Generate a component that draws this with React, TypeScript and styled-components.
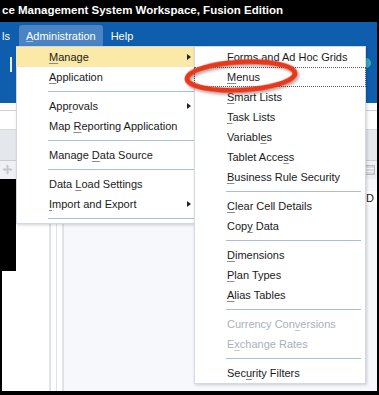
import styled, { createGlobalStyle } from "styled-components";

const GlobalStyle = createGlobalStyle`
  html, body {
    margin: 0;
    padding: 0;
    background: #000;
  }
  body {
    font-family: "Liberation Sans", Arial, sans-serif;
  }
`;

const Frame = styled.div`
  position: relative;
  width: 377px;
  height: 391px;
  border-right: 2px solid #000;
  border-bottom: 4px solid #000;
  background: #fff;
  overflow: hidden;
  display: flex;
  flex-direction: column;
`;

const TitleBar = styled.div`
  height: 22px;
  flex: none;
  background: #000;
  color: #fff;
  font-weight: 700;
  font-size: 11.5px;
  line-height: 21px;
  padding-left: 2px;
  white-space: nowrap;
`;

const BlueBand = styled.div`
  height: 81px;
  flex: none;
  background: #0f5eae;
  display: flex;
  flex-direction: column;
`;

const MenuBar = styled.div`
  height: 25px;
  display: flex;
  align-items: center;
  gap: 1px;
  padding-left: 2px;
`;

const BarItem = styled.div<{ $open?: boolean }>`
  height: 21px;
  margin-top: 2px;
  padding: 0 7px;
  display: flex;
  align-items: center;
  color: #fff;
  font-size: 11px;
  border-radius: 3px 3px 0 0;
  background: ${(p) => (p.$open ? "#4a84c2" : "transparent")};
  &:first-child {
    padding-left: 0;
    padding-right: 8px;
  }
`;

const ToolBar = styled.div`
  flex: 1;
  display: flex;
  align-items: flex-start;
  justify-content: space-between;
  padding: 10px 6px 0 10px;
`;

const ToolSep = styled.div`
  width: 2px;
  height: 15px;
  background: #e8eef6;
`;

const ToolKnob = styled.div`
  width: 10px;
  height: 10px;
  margin-top: 1px;
  border-radius: 50%;
  background: #3aa6b9;
`;

const Band = styled.div<{ $h: number; $bg: string; $line?: string }>`
  height: ${(p) => p.$h}px;
  flex: none;
  background: ${(p) => p.$bg};
  border-bottom: 1px solid ${(p) => p.$line || "transparent"};
  display: flex;
  align-items: center;
  justify-content: space-between;
  padding: 0 2px 0 2px;
`;

const MoveIcon = styled.svg`
  width: 11px;
  height: 11px;
`;

const Workspace = styled.div`
  flex: 1;
  display: flex;
`;

const SidePanel = styled.div`
  width: 47px;
  border-left: 2px solid #000;
  background: #fff;
  display: flex;
  align-items: flex-start;
`;

const BlackGutter = styled.div`
  width: 14px;
  height: 92px;
  background: #000;
`;

const Splitter = styled.div`
  width: 15px;
  display: flex;
  gap: 5px;
  background: #fff;
`;

const SplitLine = styled.div`
  width: 2px;
  background: #dfe4ec;
`;

const Canvas = styled.div`
  flex: 1;
  background: #f6f8fb;
  display: flex;
  justify-content: flex-end;
`;

const ColHead = styled.div`
  width: 11px;
  height: 14px;
  margin-top: 12px;
  background: #fff;
  font-size: 11px;
  color: #222;
  line-height: 14px;
  overflow: hidden;
`;

const Menu = styled.div<{ $left: number; $width: number }>`
  position: absolute;
  top: 46px;
  left: ${(p) => p.$left}px;
  width: ${(p) => p.$width}px;
  background: #fff;
  border: 1px solid #d3d9e2;
  box-shadow: 1px 1px 3px rgba(0, 0, 0, 0.18);
  display: flex;
  flex-direction: column;
`;

const Item = styled.div<{ $hot?: boolean; $focus?: boolean; $off?: boolean }>`
  position: relative;
  height: 20px;
  box-sizing: border-box;
  display: flex;
  align-items: center;
  font-size: 11px;
  white-space: pre;
  color: ${(p) => (p.$off ? "#a9b0ba" : "#1a1a1a")};
  background: ${(p) => (p.$hot ? "#fbe9a7" : "transparent")};
  border: 1px dotted ${(p) => (p.$focus ? "#5a5a5a" : "transparent")};
  margin: 0 -1px;
  padding-left: 32px;
  u {
    text-decoration-thickness: 1px;
    text-underline-offset: 2px;
    text-decoration-color: ${(p) => (p.$off ? "#c4c9d0" : "#8a8a8a")};
  }
`;

const Arrow = styled.span`
  position: absolute;
  right: 7px;
  top: 6px;
  width: 0;
  height: 0;
  border-top: 3.5px solid transparent;
  border-bottom: 3.5px solid transparent;
  border-left: 4px solid #222;
`;

const Sep = styled.div<{ $right: number }>`
  height: 9px;
  display: flex;
  align-items: center;
  padding: 0 ${(p) => p.$right}px 0 31px;
  &::after {
    content: "";
    flex: 1;
    height: 1px;
    background: #a9bfd8;
  }
`;

const Callout = styled.svg`
  position: absolute;
  left: 180px;
  top: 54px;
  width: 124px;
  height: 46px;
  overflow: visible;
`;

type Entry =
  | { label: string; u?: number; arrow?: boolean; hot?: boolean; focus?: boolean; off?: boolean }
  | "sep";

const mainItems: Entry[] = [
  { label: "Manage", u: 0, arrow: true, hot: true },
  { label: "Application", u: 0 },
  "sep",
  { label: "Approvals", u: 3, arrow: true },
  { label: "Map Reporting Application", u: 4 },
  "sep",
  { label: "Manage Data Source", u: 7 },
  "sep",
  { label: "Data Load Settings", u: 5 },
  { label: "Import and Export", u: 0, arrow: true },
  "sep",
];

const subItems: Entry[] = [
  { label: "Forms and Ad Hoc Grids", u: 0 },
  { label: "Menus", u: 0, focus: true },
  { label: "Smart Lists", u: 0 },
  { label: "Task Lists", u: 0 },
  { label: "Variables", u: 7 },
  { label: "Tablet Access", u: 11 },
  { label: "Business Rule Security", u: 0 },
  "sep",
  { label: "Clear Cell Details", u: 0 },
  { label: "Copy Data", u: 3 },
  "sep",
  { label: "Dimensions", u: 0 },
  { label: "Plan Types", u: 0 },
  { label: "Alias Tables", u: 0 },
  "sep",
  { label: "Currency Conversions", u: 12, off: true },
  { label: "Exchange Rates", u: 1, off: true },
  "sep",
  { label: "Security Filters", u: 3 },
];

const Label = ({ text, u }: { text: string; u?: number }) =>
  u === undefined ? (
    <span>{text}</span>
  ) : (
    <span>
      {text.slice(0, u)}
      <u>{text[u]}</u>
      {text.slice(u + 1)}
    </span>
  );

const MenuList = ({ items, sepRight }: { items: Entry[]; sepRight: number }) => (
  <>
    {items.map((it, i) =>
      it === "sep" ? (
        <Sep key={i} $right={sepRight} />
      ) : (
        <Item key={i} $hot={it.hot} $focus={it.focus} $off={it.off}>
          <Label text={it.label} u={it.u} />
          {it.arrow && <Arrow />}
        </Item>
      )
    )}
  </>
);

const App = () => {
  return (
    <>
      <GlobalStyle />
      <Frame>
        <TitleBar>ce Management System Workspace, Fusion Edition</TitleBar>
        <BlueBand>
          <MenuBar>
            <BarItem>ls</BarItem>
            <BarItem $open>
              <span>
                <u style={{ textDecorationColor: "#9fc0e4" }}>A</u>dministration
              </span>
            </BarItem>
            <BarItem>Help</BarItem>
          </MenuBar>
          <ToolBar>
            <ToolSep />
            <ToolKnob />
          </ToolBar>
        </BlueBand>
        <Band $h={7} $bg="#fff" $line="#cfd3d9" />
        <Band $h={18} $bg="#fff" $line="#d5d9df" />
        <Band $h={30} $bg="#e4e7eb" $line="#c9cdd3" />
        <Band $h={17} $bg="#eef0f3">
          <MoveIcon viewBox="0 0 12 12">
            <path
              d="M6 0.5 L8 3 H7 V5 H9 V4 L11.5 6 L9 8 V7 H7 V9 H8 L6 11.5 L4 9 H5 V7 H3 V8 L0.5 6 L3 4 V5 H5 V3 H4 Z"
              fill="#c3c7cc"
            />
          </MoveIcon>
          <svg width="10" height="10" viewBox="0 0 10 10">
            <rect x="0.5" y="0.5" width="9" height="9" fill="#d7dade" stroke="#b9bdc3" />
            <path d="M1 3.5 H9 M1 6.5 H9" stroke="#f2f3f5" />
          </svg>
        </Band>
        <Workspace>
          <SidePanel>
            <BlackGutter />
          </SidePanel>
          <Splitter>
            <SplitLine />
            <SplitLine />
            <SplitLine />
          </Splitter>
          <Canvas>
            <ColHead>D</ColHead>
          </Canvas>
        </Workspace>

        <Menu $left={16} $width={181}>
          <MenuList items={mainItems} sepRight={0} />
        </Menu>
        <Menu $left={194} $width={170}>
          <MenuList items={subItems} sepRight={4} />
        </Menu>

        <Callout viewBox="0 0 124 46">
          <defs>
            <filter id="sh" x="-20%" y="-40%" width="140%" height="180%">
              <feDropShadow dx="1.5" dy="2" stdDeviation="1.5" floodColor="#000" floodOpacity="0.35" />
            </filter>
          </defs>
          <ellipse
            cx="61"
            cy="22"
            rx="54"
            ry="14"
            fill="none"
            stroke="#e8391b"
            strokeWidth="5"
            transform="rotate(-3 61 22)"
            filter="url(#sh)"
          />
        </Callout>
      </Frame>
    </>
  );
};

export default App;
